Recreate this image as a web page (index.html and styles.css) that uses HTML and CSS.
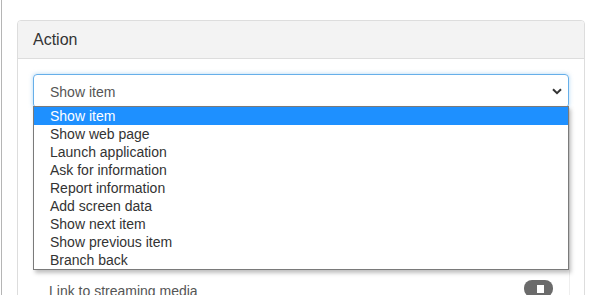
FILE: index.html
```html
<!DOCTYPE html>
<html lang="en">
<head>
    <meta charset="UTF-8">
    <meta name="viewport" content="width=device-width, initial-scale=1.0">
    <title>Action</title>
    <link rel="stylesheet" href="styles.css">
</head>
<body>
    <div class="page">
        <div class="panel">
            <div class="panel-heading">Action</div>
            <div class="panel-body">
                <div class="select-wrap">
                    <div class="select-box">
                        <span>Show item</span>
                        <svg class="chevron" width="10" height="7" viewBox="0 0 10 7">
                            <path d="M1 1.2 L5 5.2 L9 1.2" fill="none" stroke="#333" stroke-width="2"/>
                        </svg>
                    </div>
                    <ul class="dropdown">
                        <li class="selected">Show item</li>
                        <li>Show web page</li>
                        <li>Launch application</li>
                        <li>Ask for information</li>
                        <li>Report information</li>
                        <li>Add screen data</li>
                        <li>Show next item</li>
                        <li>Show previous item</li>
                        <li>Branch back</li>
                    </ul>
                </div>
                <div class="hidden-fields"></div>
                <div class="media-row">
                    <span class="media-label">Link to streaming media</span>
                    <span class="toggle"><span class="toggle-knob"></span></span>
                </div>
            </div>
        </div>
    </div>
</body>
</html>
```

FILE: styles.css
```css
body {
    margin: 0;
    font-family: "Liberation Sans", Arial, sans-serif;
    background-color: #fff;
    overflow: hidden;
}
.page {
    margin-left: 1px;
    border-left: 1px solid #b5b5b5;
    padding: 20px 0 0 15px;
    height: 300px;
}
.panel {
    width: 566px;
    border: 1px solid #ddd;
    border-radius: 4px;
    height: 320px;
}
.panel-heading {
    background-color: #f3f3f3;
    border-bottom: 1px solid #ddd;
    border-radius: 3px 3px 0 0;
    height: 37px;
    line-height: 38px;
    padding-left: 15px;
    font-size: 16px;
    color: #333;
}
.panel-body {
    padding: 15px 15px 15px 15px;
}
.select-wrap {
    position: relative;
}
.select-box {
    display: flex;
    align-items: center;
    justify-content: space-between;
    height: 31px;
    border: 1px solid #66afe9;
    border-radius: 4px;
    box-shadow: 0 0 4px rgba(102, 175, 233, 0.5);
    padding: 1px 6px 0 16px;
    font-size: 14px;
    color: #555;
}
.chevron {
    display: block;
}
.dropdown {
    position: absolute;
    left: 0;
    right: 0;
    top: 32px;
    margin: 0;
    padding: 0;
    list-style: none;
    background-color: #fff;
    border: 1px solid #7a7a7a;
    box-shadow: 2px 3px 4px rgba(0, 0, 0, 0.25);
    z-index: 2;
}
.dropdown li {
    height: 18px;
    line-height: 19px;
    padding-left: 16px;
    font-size: 14px;
    color: #333;
}
.dropdown li.selected {
    background-color: #1e90ff;
    color: #fff;
}
.hidden-fields {
    height: 172px;
    margin-right: -1px;
    border-right: 1px solid #eee;
}
.media-row {
    display: flex;
    align-items: flex-start;
    justify-content: space-between;
    padding: 0 16px 0 16px;
    border-right: 1px solid #eee;
    margin-right: -1px;
    height: 30px;
}
.media-label {
    font-size: 14px;
    color: #555;
    margin-top: 3px;
}
.toggle {
    display: flex;
    align-items: center;
    justify-content: center;
    width: 29px;
    height: 17px;
    border-radius: 8px;
    background-color: #6b6b6b;
}
.toggle-knob {
    width: 7px;
    height: 8px;
    background-color: #fff;
    margin-left: 4px;
}
```
